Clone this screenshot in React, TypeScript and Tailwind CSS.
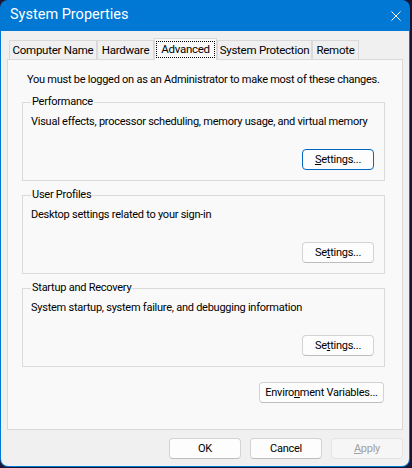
import type { ReactNode } from "react";

const font = "font-['Segoe_UI',Roboto,'Liberation_Sans',sans-serif]";

function Btn({
    children,
    className = "",
    focused = false,
    disabled = false,
}: {
    children: ReactNode;
    className?: string;
    focused?: boolean;
    disabled?: boolean;
}) {
    return (
        <button
            className={
                "h-[21px] rounded-[4px] border text-[11px] leading-none whitespace-nowrap flex items-center justify-center " +
                (focused
                    ? "border-[#0067c0] bg-[#fdfdfd] text-black "
                    : disabled
                    ? "border-[#e3e3e3] bg-[#f6f6f6] text-[#a0a0a0] "
                    : "border-[#d3d3d3] border-b-[#bdbdbd] bg-[#fdfdfd] text-black ") +
                className
            }
        >
            {children}
        </button>
    );
}

function Group({
    title,
    desc,
    btn,
    className = "",
}: {
    title: string;
    desc: string;
    btn: ReactNode;
    className?: string;
}) {
    return (
        <fieldset className={"min-w-0 border border-[#dadada] pl-[8px] pr-[10px] pb-[10px] " + className}>
            <legend className="px-[1px] text-[11px] leading-[16px]">{title}</legend>
            <p className="mt-[4px] text-[11px] leading-[16px] whitespace-nowrap">{desc}</p>
            <div className="mt-[19px] flex justify-end">{btn}</div>
        </fieldset>
    );
}

const tabs = [
    { label: "Computer Name", w: "w-[88px]" },
    { label: "Hardware", w: "w-[57px]" },
    { label: "Advanced", w: "w-[63px]", active: true },
    { label: "System Protection", w: "w-[95px]" },
    { label: "Remote", w: "w-[47px]" },
];

export default function App() {
    return (
        <div className={"w-[412px] h-[468px] bg-[#1d1433] " + font}>
            <div className="w-[410px] h-[467px] rounded-[8px] bg-[#0078d4] px-px pb-px flex flex-col overflow-hidden">
                {/* Title bar */}
                <div className="h-[31px] flex items-center justify-between pl-[9px] pr-[8px] text-white">
                    <span className="text-[14.5px] leading-none">System Properties</span>
                    <svg width="10" height="10" viewBox="0 0 10 10" className="mb-[-1px]">
                        <path d="M0.5 0.5 L9.5 9.5 M9.5 0.5 L0.5 9.5" stroke="white" strokeWidth="1" />
                    </svg>
                </div>

                <div className="flex-1 bg-[#f0f0f0] rounded-b-[7px] px-[6px] pt-[7px] text-black tracking-[-0.25px]">
                    {/* Tabs */}
                    <div className="flex items-end h-[22px] -mb-px pl-[2px] relative z-10">
                        {tabs.map((t) =>
                            t.active ? (
                                <div
                                    key={t.label}
                                    className={
                                        t.w +
                                        " h-[22px] border border-b-0 border-[#d9d9d9] bg-[#f9f9f9] flex items-start pt-[2px] px-[1px]"
                                    }
                                >
                                    <span className="flex-1 text-center border border-dotted border-black h-[17px] text-[11.5px] leading-[15px] whitespace-nowrap">
                                        {t.label}
                                    </span>
                                </div>
                            ) : (
                                <div
                                    key={t.label}
                                    className={
                                        t.w +
                                        " h-[19px] mb-px border border-b-0 border-[#d9d9d9] bg-[#f0f0f0] flex items-center justify-center text-[11.5px] leading-none pt-[1px] whitespace-nowrap"
                                    }
                                >
                                    {t.label}
                                </div>
                            )
                        )}
                    </div>

                    {/* Panel */}
                    <div className="h-[371px] border border-[#d9d9d9] bg-[#f9f9f9] pl-[14px] pr-[17px] pt-[12px]">
                        <p className="ml-[5px] text-[11px] leading-[16px] whitespace-nowrap">
                            You must be logged on as an Administrator to make most of these changes.
                        </p>

                        <Group
                            className="mt-[6px]"
                            title="Performance"
                            desc="Visual effects, processor scheduling, memory usage, and virtual memory"
                            btn={
                                <Btn focused className="w-[72px]">
                                    <span><span className="underline">S</span>ettings...</span>
                                </Btn>
                            }
                        />
                        <Group
                            className="mt-[6px]"
                            title="User Profiles"
                            desc="Desktop settings related to your sign-in"
                            btn={
                                <Btn className="w-[72px]">
                                    <span>Se<span className="underline">t</span>tings...</span>
                                </Btn>
                            }
                        />
                        <Group
                            className="mt-[6px]"
                            title="Startup and Recovery"
                            desc="System startup, system failure, and debugging information"
                            btn={
                                <Btn className="w-[72px]">
                                    <span>Se<span className="underline">t</span>tings...</span>
                                </Btn>
                            }
                        />

                        <div className="mt-[15px] flex justify-end pr-px">
                            <Btn className="w-[125px]">
                                <span>Enviro<span className="underline">n</span>ment Variables...</span>
                            </Btn>
                        </div>
                    </div>

                    {/* Dialog buttons */}
                    <div className="mt-[8px] flex justify-end gap-[9px]">
                        <Btn className="w-[72px]">OK</Btn>
                        <Btn className="w-[72px]">Cancel</Btn>
                        <Btn disabled className="w-[72px]">
                            <span><span className="underline">A</span>pply</span>
                        </Btn>
                    </div>
                </div>
            </div>
        </div>
    );
}
